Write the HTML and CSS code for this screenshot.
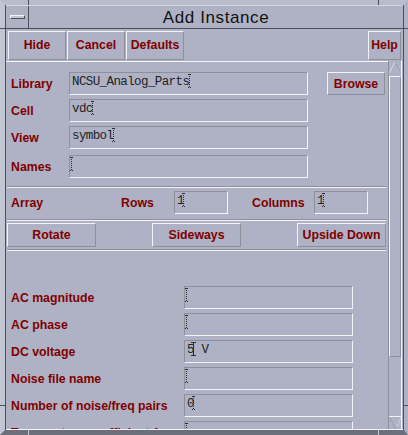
FILE: index.html
```html
<!DOCTYPE html>
<html>
<head>
<meta charset="utf-8">
<title>Add Instance</title>
<link rel="stylesheet" href="styles.css">
</head>
<body>
<div class="window">
  <span class="tick tk-t1"></span>
  <span class="tick tk-t2"></span>
  <span class="tick tk-l1"></span>
  <span class="tick tk-l2"></span>
  <span class="tick tk-r1"></span>
  <span class="tick tk-r2"></span>
  <span class="tick tk-b1"></span>
  <span class="tick tk-b2"></span>
  <div class="inner">
    <div class="titlebar">
      <div class="menubtn"><span class="menubar"></span></div>
      <div class="title">Add Instance</div>
    </div>
    <div class="client">
      <div class="toolbar">
        <div class="btn tb">Hide</div>
        <div class="btn tb">Cancel</div>
        <div class="btn tb">Defaults</div>
        <span class="grow"></span>
        <div class="btn help">Help</div>
      </div>
      <div class="scrollwin">
        <div class="form">
          <div class="row">
            <div class="lbl top">Library</div>
            <div class="input wide">NCSU_Analog_Parts<span class="caret"></span></div>
            <div class="btn browse">Browse</div>
          </div>
          <div class="row r-gap">
            <div class="lbl top">Cell</div>
            <div class="input wide">vdc<span class="caret"></span></div>
          </div>
          <div class="row r-gap">
            <div class="lbl top">View</div>
            <div class="input wide">symbol<span class="caret"></span></div>
          </div>
          <div class="row r-names">
            <div class="lbl top">Names</div>
            <div class="input wide"><span class="caret"></span></div>
          </div>
          <div class="sep s1"></div>
          <div class="row r-array">
            <div class="lbl arr">Array</div>
            <div class="lbl rows">Rows</div>
            <div class="input small">1<span class="caret"></span></div>
            <div class="lbl cols">Columns</div>
            <div class="input small">1<span class="caret"></span></div>
          </div>
          <div class="sep s2"></div>
          <div class="btnrow">
            <div class="btn wbtn">Rotate</div>
            <div class="btn wbtn">Sideways</div>
            <div class="btn wbtn">Upside Down</div>
          </div>
          <div class="sep s3"></div>
          <div class="row r-first">
            <div class="lbl prop">AC magnitude</div>
            <div class="input mid"><span class="caret"></span></div>
          </div>
          <div class="row r-gap">
            <div class="lbl prop">AC phase</div>
            <div class="input mid"><span class="caret"></span></div>
          </div>
          <div class="row r-gap">
            <div class="lbl prop">DC voltage</div>
            <div class="input mid">5<span class="caret solid"></span> V</div>
          </div>
          <div class="row r-gap">
            <div class="lbl prop">Noise file name</div>
            <div class="input mid"><span class="caret"></span></div>
          </div>
          <div class="row r-gap">
            <div class="lbl prop">Number of noise/freq pairs</div>
            <div class="input mid">0<span class="caret"></span></div>
          </div>
          <div class="row r-gap">
            <div class="lbl prop">Temperature coefficient 1</div>
            <div class="input mid"><span class="caret"></span></div>
          </div>
        </div>
        <div class="scrollbar">
          <div class="arrow up">
            <svg width="12" height="15" viewBox="0 0 12 15">
              <path d="M0.5 11.5 L5.5 1.5" stroke="#f4f4f8" stroke-width="1" stroke-dasharray="1 1" fill="none"/>
              <path d="M6.5 1.5 L11.5 11.5" stroke="#8e9099" stroke-width="1" stroke-dasharray="1 1" fill="none"/>
            </svg>
          </div>
          <div class="slider"></div>
          <div class="trough"></div>
          <div class="arrow down">
            <svg width="12" height="13" viewBox="0 0 12 13">
              <path d="M0 0.5 H12" stroke="#f4f4f8" stroke-width="1" fill="none"/>
              <path d="M1.5 2.5 L5.5 11.5" stroke="#8e9099" stroke-width="1" stroke-dasharray="1 1" fill="none"/>
              <path d="M11.5 2.5 L7.5 11.5" stroke="#f4f4f8" stroke-width="1" stroke-dasharray="1 1" fill="none"/>
              <path d="M5.5 11.5 H7.5" stroke="#8e9099" stroke-width="1" fill="none"/>
            </svg>
          </div>
        </div>
      </div>
    </div>
  </div>
</div>
</body>
</html>
```
FILE: styles.css
```css
html, body {
  margin: 0;
  padding: 0;
  background: #aeb2c4;
}

.window {
  position: relative;
  width: 408px;
  height: 435px;
  box-sizing: border-box;
  background: #aeb2c4;
  border-top: 5px solid #b9bccb;
  border-left: 5px solid #c2c5d2;
  border-right: 4px solid #aeb2c4;
  border-bottom: 5px solid #6b6e7b;
  font-family: "Liberation Sans", Arial, sans-serif;
}

.tick {
  position: absolute;
  background: #4c4f5a;
}
.tk-t1 { left: 23px; top: -5px; width: 1px; height: 5px; }
.tk-t2 { left: 373px; top: -5px; width: 1px; height: 5px; }
.tk-l1 { left: -5px; top: 23px; width: 5px; height: 1px; }
.tk-l2 { left: -5px; top: 400px; width: 5px; height: 1px; }
.tk-r1 { right: -4px; top: 23px; width: 4px; height: 1px; }
.tk-r2 { right: -4px; top: 400px; width: 4px; height: 1px; }
.tk-b1 { left: 23px; bottom: -5px; width: 1px; height: 5px; background: #c2c5d2; }
.tk-b2 { left: 373px; bottom: -5px; width: 1px; height: 5px; background: #c2c5d2; }

.inner {
  height: 100%;
  box-sizing: border-box;
  border-left: 1px solid #4c4f5a;
  border-right: 1px solid #4c4f5a;
  display: flex;
  flex-direction: column;
}

.titlebar {
  height: 24px;
  box-sizing: border-box;
  border-top: 1px solid #d4d6e0;
  border-bottom: 1px solid #4c4f5a;
  display: flex;
}

.menubtn {
  width: 23px;
  box-sizing: border-box;
  border-right: 1px solid #4c4f5a;
  padding: 9px 0 0 4px;
}

.menubar {
  display: block;
  width: 15px;
  height: 4px;
  box-sizing: border-box;
  border-top: 1px solid #f4f4f8;
  border-left: 1px solid #f4f4f8;
  border-bottom: 1px solid #4c4f5a;
  border-right: 1px solid #4c4f5a;
  background: #c2c5d2;
}

.title {
  flex: 1;
  height: 22px;
  box-sizing: border-box;
  padding-top: 1px;
  line-height: 22px;
  text-align: center;
  font-size: 17px;
  letter-spacing: 0.6px;
  color: #111;
}

.client {
  flex: 1;
  display: flex;
  flex-direction: column;
  min-height: 0;
}

.toolbar {
  display: flex;
  gap: 1px;
  padding: 2px 2px 0 2px;
}

.grow { flex: 1; }

.btn {
  box-sizing: border-box;
  border-top: 1px solid #f4f4f8;
  border-left: 1px solid #f4f4f8;
  border-right: 1px solid #8e9099;
  border-bottom: 1px solid #8e9099;
  display: flex;
  align-items: center;
  justify-content: center;
  color: #800000;
  font-weight: bold;
  font-size: 12.3px;
  line-height: 14px;
  white-space: nowrap;
}

.tb { width: 58px; height: 29px; padding-bottom: 2px; }
.help { width: 33px; height: 29px; padding-bottom: 2px; }

.scrollwin {
  flex: 1;
  margin-top: 1px;
  display: flex;
  min-height: 0;
  border-bottom: 1px solid #f4f4f8;
}

.form {
  flex: 1;
  min-width: 0;
  overflow: hidden;
  border-top: 1px solid #f4f4f8;
  padding: 10px 2px 0 1px;
}

.row {
  display: flex;
  align-items: center;
  height: 23px;
}
.r-gap { margin-top: 4px; }
.r-names { margin-top: 6px; }
.r-array { margin-top: 3px; }
.r-first { margin-top: 35px; }

.lbl {
  color: #800000;
  font-weight: bold;
  font-size: 12.3px;
  line-height: 14px;
  white-space: nowrap;
}
.lbl.top { width: 62px; box-sizing: border-box; padding-left: 4px; }
.lbl.arr { width: 114px; box-sizing: border-box; padding-left: 4px; }
.lbl.rows { width: 53px; }
.lbl.cols { width: 62px; margin-left: 24px; }
.lbl.prop { width: 177px; box-sizing: border-box; padding-left: 4px; }

.input {
  height: 23px;
  box-sizing: border-box;
  border-top: 1px solid #8e9099;
  border-left: 1px solid #8e9099;
  border-right: 1px solid #f4f4f8;
  border-bottom: 1px solid #f4f4f8;
  padding: 1px 0 0 2px;
  font-family: "Liberation Mono", "Courier New", monospace;
  font-size: 12.5px;
  letter-spacing: -0.6px;
  line-height: 16px;
  color: #222;
  white-space: pre;
  overflow: hidden;
}
.input.wide { width: 239px; }
.input.small { width: 54px; }
.input.mid { width: 169px; }

.caret {
  display: inline-block;
  width: 3px;
  height: 14px;
  margin: 0 -1.2px 0 -1.8px;
  vertical-align: -3px;
  background:
    repeating-linear-gradient(to bottom, #2a2a2a 0 1px, transparent 1px 2px) center / 1px 100% no-repeat,
    linear-gradient(90deg, #2a2a2a 0 1px, transparent 1px 2px, #2a2a2a 2px 3px) top / 3px 1px no-repeat,
    linear-gradient(90deg, #2a2a2a 0 1px, transparent 1px 2px, #2a2a2a 2px 3px) bottom / 3px 1px no-repeat;
}
.caret.solid {
  width: 5px;
  margin: 0 -1.9px 0 -2.5px;
  background:
    linear-gradient(#2a2a2a, #2a2a2a) center / 1px 100% no-repeat,
    linear-gradient(#2a2a2a, #2a2a2a) top / 5px 1px no-repeat,
    linear-gradient(#2a2a2a, #2a2a2a) bottom / 5px 1px no-repeat;
}

.browse {
  width: 58px;
  height: 23px;
  margin-left: 19px;
}

.sep {
  border-top: 1px solid #8e9099;
  border-bottom: 1px solid #f4f4f8;
}
.s1 { margin-top: 8px; }
.s2 { margin-top: 5px; }
.s3 { margin-top: 2px; }

.btnrow {
  display: flex;
  justify-content: space-between;
  margin-top: 2px;
}
.wbtn { width: 89px; height: 24px; }

.scrollbar {
  width: 14px;
  margin-right: 1px;
  box-sizing: border-box;
  border-left: 1px solid #8e9099;
  border-right: 1px solid #f4f4f8;
  display: flex;
  flex-direction: column;
}

.arrow { flex: none; }
.arrow svg { display: block; }
.arrow.up { height: 15px; }
.arrow.down { height: 13px; }

.slider {
  flex: none;
  height: 281px;
  box-sizing: border-box;
  border-top: 1px solid #f4f4f8;
  border-left: 1px solid #f4f4f8;
  border-right: 1px solid #8e9099;
  border-bottom: 1px solid #8e9099;
}

.trough { flex: 1; }
```
